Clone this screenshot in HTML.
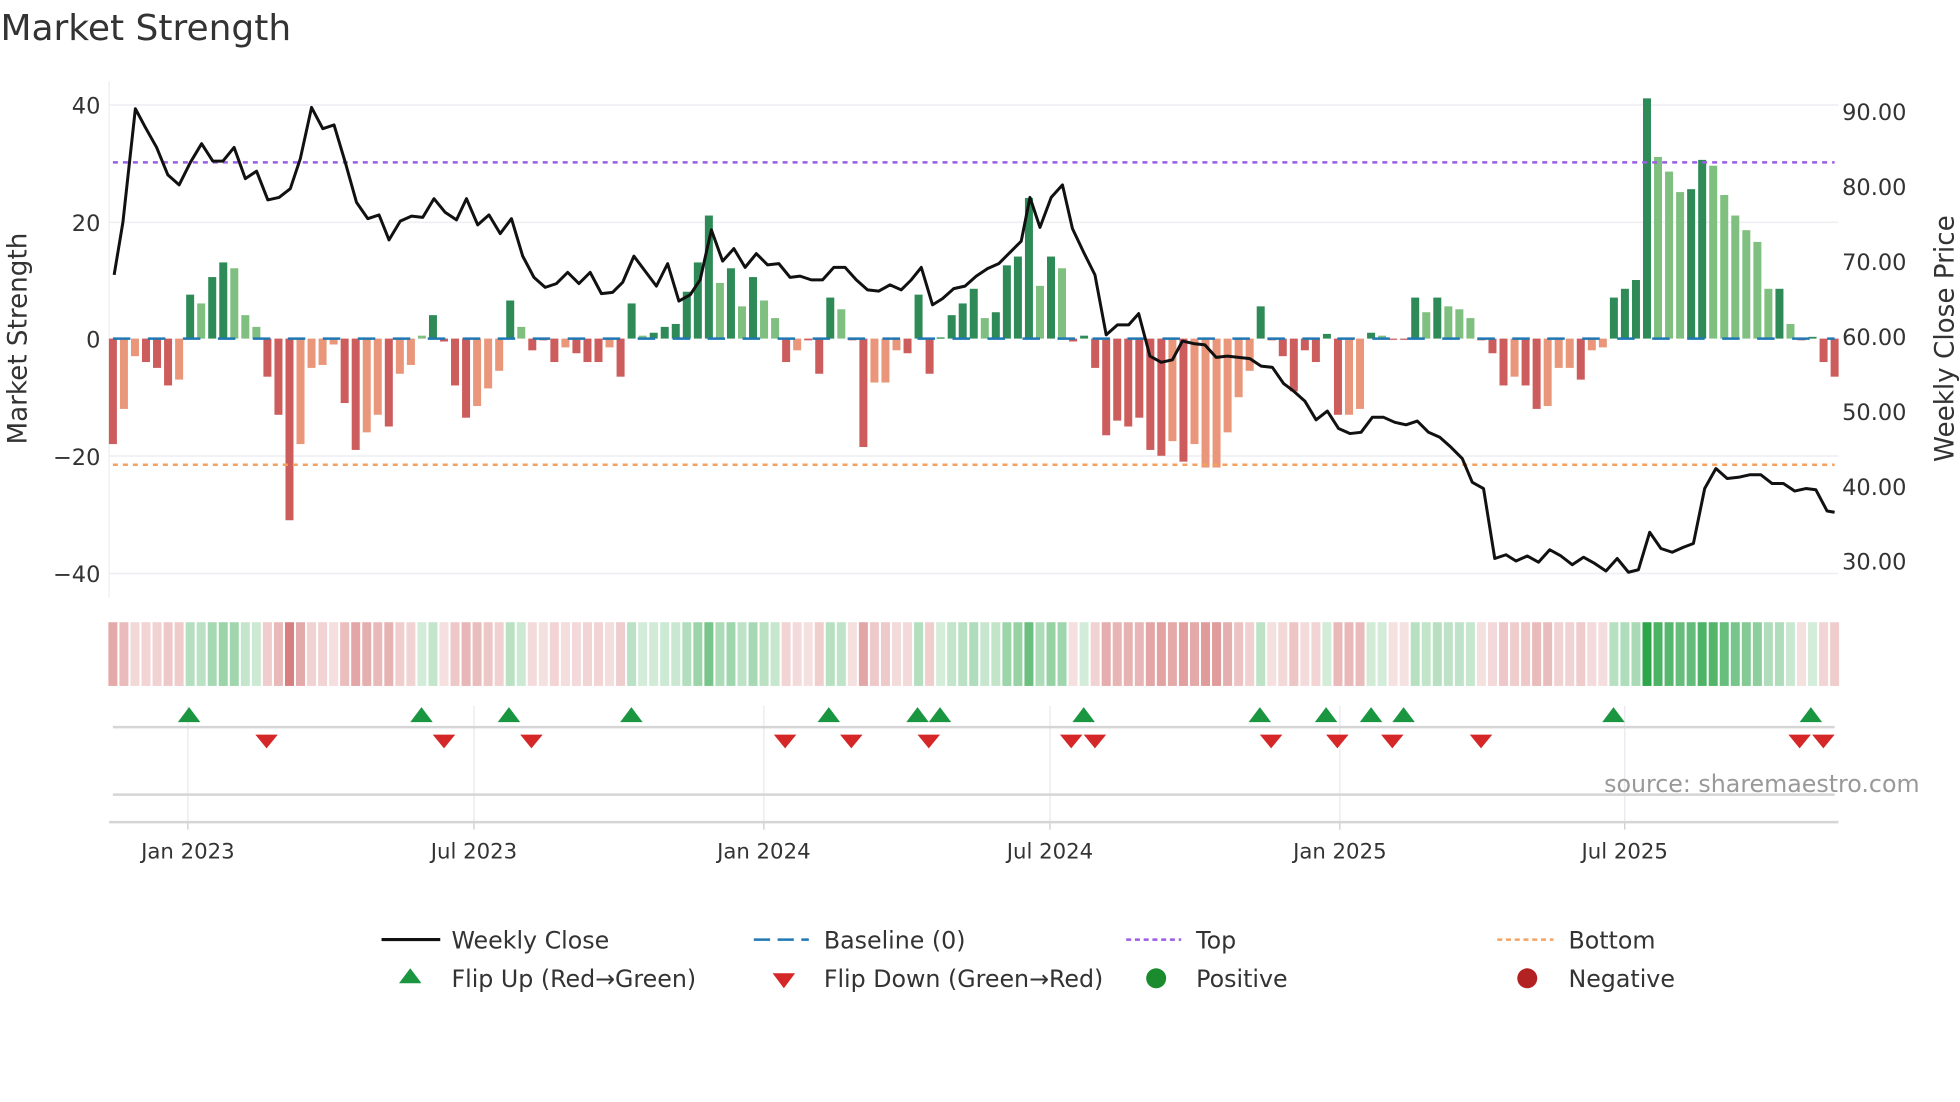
<!DOCTYPE html>
<html><head><meta charset="utf-8"><style>
html,body{margin:0;padding:0;background:#fff;width:1960px;height:1102px;overflow:hidden}
svg{display:block}
text{font-family:"DejaVu Sans","Liberation Sans",sans-serif;fill:#333}
</style></head><body>
<svg id="s" width="1960" height="1102" viewBox="0 0 1568 882" xmlns="http://www.w3.org/2000/svg">
<text x="0" y="32" font-size="28.8">Market Strength</text>
<g id="grid" stroke="#eeeef3" stroke-width="1.2">
<line x1="87" y1="84" x2="1471" y2="84"/><line x1="87" y1="178" x2="1471" y2="178"/><line x1="87" y1="365" x2="1471" y2="365"/><line x1="87" y1="459" x2="1471" y2="459"/>
</g>
<line x1="87" y1="65" x2="87" y2="478" stroke="#eee" stroke-width="1"/>
<g font-size="18" text-anchor="end">
<text x="80" y="91">40</text><text x="80" y="185">20</text><text x="80" y="278">0</text><text x="80" y="372">−20</text><text x="80" y="466">−40</text>
</g>
<g font-size="18">
<text x="1474" y="96">90.00</text><text x="1474" y="156">80.00</text><text x="1474" y="216">70.00</text><text x="1474" y="276">60.00</text><text x="1474" y="336">50.00</text><text x="1474" y="396">40.00</text><text x="1474" y="456">30.00</text>
</g>
<text transform="translate(21,271) rotate(-90)" font-size="21" text-anchor="middle">Market Strength</text>
<text transform="translate(1563,271) rotate(-90)" font-size="21" text-anchor="middle">Weekly Close Price</text>
<g id="bars"></g>
<line x1="90" y1="271" x2="1468" y2="271" stroke="#1f77b4" stroke-width="2" stroke-dasharray="14,14"/>
<line x1="90" y1="130" x2="1468" y2="130" stroke="#9b5de5" stroke-width="2" stroke-dasharray="4,4"/>
<line x1="90" y1="372" x2="1468" y2="372" stroke="#f4a261" stroke-width="2" stroke-dasharray="4,4"/>
<polyline id="price" fill="none" stroke="#111" stroke-width="2.4" stroke-linejoin="round"/>
<g id="heat"></g>
<g id="vg" stroke="#e8e8ee" stroke-width="1"></g>
<line x1="90" y1="582" x2="1468" y2="582" stroke="#d5d5d5" stroke-width="2"/>
<line x1="90" y1="636" x2="1468" y2="636" stroke="#d5d5d5" stroke-width="2"/>
<line x1="87" y1="658" x2="1471" y2="658" stroke="#d5d5d5" stroke-width="2"/>
<g id="flips"></g>
<text x="1536" y="634" font-size="19" text-anchor="end" fill="#999" style="fill:#999">source: sharemaestro.com</text>
<g font-size="17" text-anchor="middle">
<text x="150" y="687">Jan 2023</text><text x="379" y="687">Jul 2023</text><text x="611" y="687">Jan 2024</text><text x="840" y="687">Jul 2024</text><text x="1072" y="687">Jan 2025</text><text x="1300" y="687">Jul 2025</text>
</g>
<g font-size="19">
<line x1="305" y1="752" x2="352" y2="752" stroke="#111" stroke-width="2.5"/>
<text x="361" y="759">Weekly Close</text>
<line x1="603" y1="752" x2="647" y2="752" stroke="#1f77b4" stroke-width="2" stroke-dasharray="13,6"/>
<text x="659" y="759">Baseline (0)</text>
<line x1="901" y1="752" x2="945" y2="752" stroke="#9b5de5" stroke-width="2" stroke-dasharray="4,3"/>
<text x="957" y="759">Top</text>
<line x1="1198" y1="752" x2="1243" y2="752" stroke="#f4a261" stroke-width="2" stroke-dasharray="4,3"/>
<text x="1255" y="759">Bottom</text>
<polygon points="319,787 337,787 328,775" fill="#1a9641"/>
<text x="361" y="790">Flip Up (Red→Green)</text>
<polygon points="618,779 636,779 627,791" fill="#d62728"/>
<text x="659" y="790">Flip Down (Green→Red)</text>
<circle cx="925" cy="783" r="8" fill="#1a8c2e"/>
<text x="957" y="790">Positive</text>
<circle cx="1222" cy="783" r="8" fill="#b22222"/>
<text x="1255" y="790">Negative</text>
</g>
</svg>
<script>
var D="d-18 l-12 l-3 d-4 d-5 d-8 l-7 d7.5 l6 d10.5 d13 l12 l4 l2 d-6.5 d-13 d-31 l-18 l-5 l-4.5 l-1 d-11 d-19 l-16 l-13 d-15 l-6 l-4.5 l0.5 d4 d-0.5 d-8 d-13.5 l-11.5 l-8.5 l-5.5 d6.5 l2 d-2 d-0.3 d-4 l-1.5 d-2.5 d-4 d-4 l-1.5 d-6.5 d6 l0.5 d1 d2 d2.5 d8 d13 d21 l9.5 d12 l5.5 d10.5 l6.5 l3.5 d-4 l-2 d-0.3 d-6 d7 l5 d-0.3 d-18.5 l-7.5 l-7.5 l-2 d-2.5 d7.5 d-6 d0.2 d4 d6 d8.5 l3.5 d4.5 d12.5 d14 d24 l9 d14 l12 d-0.5 d0.5 d-5 d-16.5 d-14 d-15 d-13.5 d-19 d-20 l-17.5 d-21 l-18 l-22 l-22 l-16 l-10 l-5.5 d5.5 d-0.3 d-3 d-9 d-2 d-4 d0.8 d-13 l-13 l-12 d1 l0.5 d-0.2 d-0.2 d7 l4.5 d7 l5.5 l5 l3.5 d-0.3 d-2.5 d-8 l-6.5 d-8 d-12 l-11.5 l-5 l-5 d-7 l-2 l-1.5 d7 d8.5 d10 d41 l31 l28.5 l25 d25.5 d30.5 l29.5 l24.5 l21 l18.5 l16.5 l8.5 d8.5 l2.5 d-0.3 d0.3 d-4 d-6.5".split(" ");
var n=D.length,ns="http://www.w3.org/2000/svg",step=1378/(n-1);
function el(t,a,p){var e=document.createElementNS(ns,t);for(var k in a)e.setAttribute(k,a[k]);document.getElementById(p).appendChild(e);}
D.forEach(function(s,i){var dk=s[0]=="d",v=parseFloat(s.slice(1)),x=90+i*step,h=Math.abs(v)*4.69;
 var c=v>=0?(dk?"#2e8b57":"#7fbf7f"):(dk?"#cd5c5c":"#e9967a");
 el("rect",{x:x-3.2,y:v>=0?271-h:271,width:6.4,height:Math.max(h,1),fill:c},"bars");
 var a=Math.min(1,0.2+Math.abs(v)/40*0.85);
 var hc=v>=0?"rgba(46,165,75,"+a+")":"rgba(200,80,80,"+(a*0.85)+")";
 el("rect",{x:x-3.6,y:498,width:7.2,height:51,fill:hc},"heat");
});
var P="91,220 98,178 108,87 116,102 125,118 134,140 143,148 152,130 161,115 170,129 178,129 187,118 196,143 205,137 214,160 223,158 232,151 240,127 249,86 258,103 267,100 276,130 285,162 294,175 303,172 311,192 320,177 329,173 338,174 347,159 356,170 365,176 373,159 382,180 391,172 400,187 409,175 418,205 427,222 436,230 445,227 454,218 463,227 472,218 481,235 490,234 498,226 507,205 516,217 525,229 534,211 543,241 552,236 560,224 569,184 578,209 587,199 596,214 605,203 614,212 623,211 632,222 640,221 649,224 658,224 667,214 676,214 685,224 694,232 703,233 712,228 721,232 729,224 737,214 746,244 754,239 763,231 772,229 781,221 790,215 799,211 808,202 817,193 824,158 832,182 841,158 850,148 858,183 867,202 876,220 885,268 894,260 903,260 911,251 920,285 929,290 938,288 946,273 955,275 964,276 973,286 982,285 991,286 1000,287 1009,293 1018,294 1027,307 1035,313 1044,321 1053,336 1062,329 1071,343 1080,347 1089,346 1098,334 1107,334 1116,338 1125,340 1134,337 1143,346 1152,350 1161,358 1170,367 1178,386 1187,391 1196,447 1205,444 1213,449 1222,445 1231,450 1240,440 1249,445 1258,452 1267,446 1276,451 1285,457 1294,447 1303,458 1311,456 1320,426 1329,439 1338,442 1347,438 1355,435 1364,391 1373,375 1382,383 1391,382 1400,380 1409,380 1418,387 1427,387 1436,393 1445,391 1453,392 1462,409 1468,410";
document.getElementById("price").setAttribute("points",P);
[150,379,611,840,1072,1300].forEach(function(x){el("line",{x1:x,y1:565,x2:x,y2:658},"vg");el("line",{x1:x,y1:658,x2:x,y2:664,stroke:"#ccc"},"vg");});
[151,337,407,505,663,734,752,867,1008,1061,1097,1123,1291,1449].forEach(function(x){el("polygon",{points:(x-9)+",578 "+(x+9)+",578 "+x+",566",fill:"#1a9641"},"flips");});
[213,355,425,628,681,743,857,876,1017,1070,1114,1185,1440,1459].forEach(function(x){el("polygon",{points:(x-9)+",588 "+(x+9)+",588 "+x+",599",fill:"#d62728"},"flips");});
</script>
</body></html>
